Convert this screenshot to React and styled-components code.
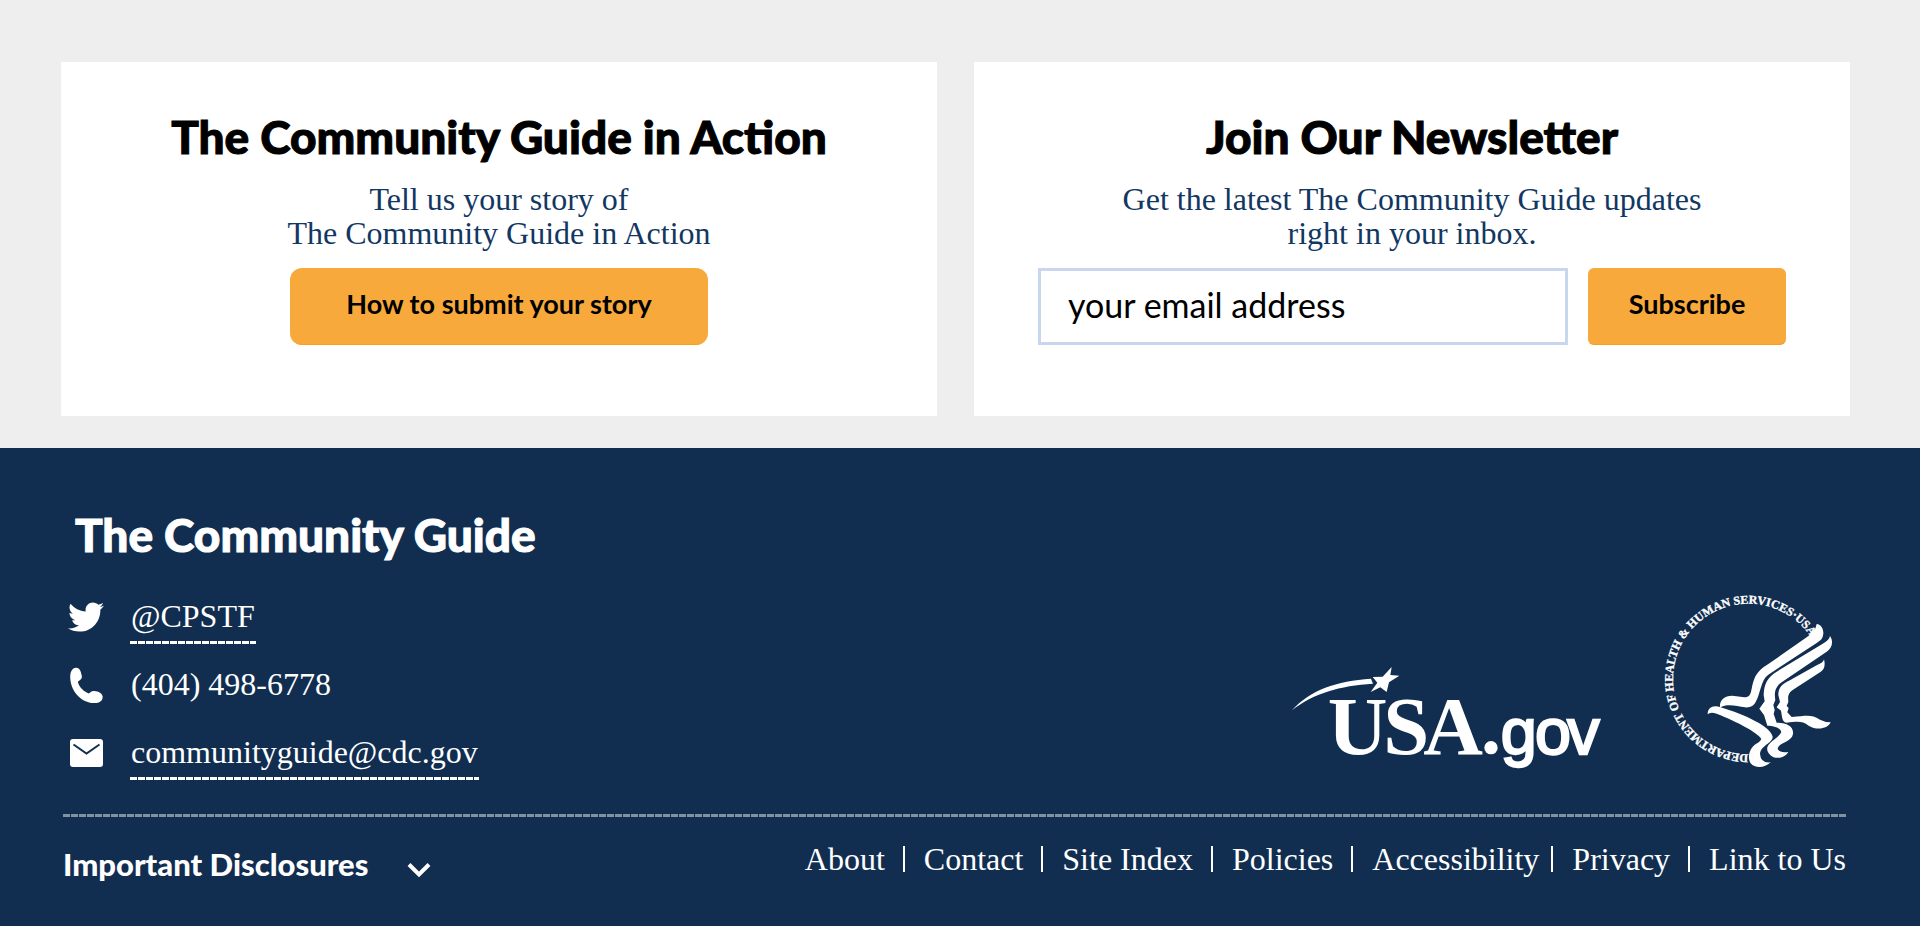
import React from "react";
import styled, { createGlobalStyle } from "styled-components";
import { FaTwitter } from "react-icons/fa";

const sans = `Lato, "Liberation Sans", sans-serif`;
const serif = `"Liberation Serif", serif`;
const navy = "#112e51";
const amber = "#f8a93b";

const GlobalStyle = createGlobalStyle`
  *, *::before, *::after { box-sizing: border-box; }
  body { margin: 0; background: ${navy}; font-family: ${serif}; }
  h2, p, ul { margin: 0; padding: 0; }
  ul { list-style: none; }
`;

const Promos = styled.main`
  display: grid;
  grid-template-columns: 1fr 1fr;
  gap: 37px;
  padding: 62px 70px 32px 61px;
  background: #eee;
`;

const Card = styled.section`
  display: flex;
  flex-direction: column;
  align-items: center;
  padding: 47px 64px 71px;
  background: #fff;
  text-align: center;
`;

const Heading = styled.h2`
  font: 900 46px/56px ${sans};
  color: ${(p) => (p.$light ? "#fff" : "#000")};
  -webkit-text-stroke: 1px currentColor;
`;

const CardText = styled.p`
  margin: 17px 0 18px;
  font: 32px/34px ${serif};
  color: #123762;
`;

const Button = styled.button`
  height: 77px;
  padding: 0 0 4px;
  width: ${(p) => (p.$wide ? "418px" : "198px")};
  border: 0;
  border-bottom: 1px solid #f99f1b;
  border-radius: ${(p) => (p.$wide ? "12px" : "6px")};
  background: ${amber};
  color: #000;
  font: 700 27px/32px ${sans};
  cursor: pointer;
`;

const SignupForm = styled.form`
  display: flex;
  align-self: stretch;
  gap: 20px;
`;

const EmailInput = styled.input`
  flex: 1;
  min-width: 0;
  height: 77px;
  padding: 0 27px 4px;
  border: 3px solid #c9d7ee;
  background: #fff;
  color: #000;
  font: 400 34px/40px ${sans};
  &::placeholder { color: #000; opacity: 1; }
`;

const Footer = styled.footer`
  padding: 59px 74px 28px 63px;
  background: ${navy};
  color: #fff;
`;

const FooterTop = styled.div`
  display: flex;
  justify-content: space-between;
  align-items: flex-end;
  padding: 0 0 12px;
`;

const Contact = styled.div`
  ${Heading} { padding-left: 12px; margin-bottom: 35px; }
`;

const ContactRow = styled.li`
  display: flex;
  align-items: flex-start;
  gap: 26px;
  height: 68px;
  padding-left: 5px;
  font: 32px/36px ${serif};
`;

const IconBox = styled.span`
  display: flex;
  justify-content: center;
  align-items: center;
  width: 36px;
  height: 38px;
`;

const dashes = (color) =>
  `repeating-linear-gradient(90deg, ${color} 0 7px, transparent 7px 8px)`;

const ContactLink = styled.a`
  padding: 0 1px 10px;
  color: inherit;
  text-decoration: none;
  background: ${(p) => (p.$plain ? "none" : dashes("#fff"))} bottom left / 100% 3px no-repeat;
`;

const Logos = styled.div`
  display: flex;
  align-items: flex-end;
  gap: 60px;
  padding: 0 9px 30px 0;
`;

const LogoLink = styled.a`
  display: block;
  color: #fff;
  svg { display: block; overflow: visible; }
`;

const Divider = styled.hr`
  height: 3px;
  margin: 0;
  border: 0;
  background: ${dashes("#8191a4")};
`;

const FooterBottom = styled.div`
  display: flex;
  justify-content: space-between;
  align-items: flex-start;
  padding-top: 25px;
`;

const Disclosures = styled.button`
  display: flex;
  align-items: center;
  gap: 39px;
  margin-top: 3px;
  padding: 0;
  border: 0;
  background: none;
  color: #fff;
  font: 900 31px/38px ${sans};
  cursor: pointer;
  svg { margin-top: 12px; }
`;

const LinkList = styled.ul`
  display: flex;
  font: 32px/34px ${serif};
`;

const LinkItem = styled.li`
  display: flex;
  &:not(:last-child)::after {
    content: "";
    width: 2px;
    height: 26px;
    margin: 4px 19px 0 ${(p) => (p.$tight ? "12px" : "18px")};
    background: #fff;
  }
`;

const FooterLink = styled.a`
  color: inherit;
  text-decoration: none;
`;

const PhoneIcon = () => (
  <svg width="35" height="37" viewBox="58 226 104 112" fill="#fff" aria-hidden="true">
    <path d="M61 262C59 240 67 229 78 228C90 227 94 242 96 254C97 265 85 267 84 272C88 287 104 302 117 306C122 305 124 298 133 299C147 300 158 306 159 316C159 331 146 336 132 335C95 333 64 302 61 262Z" />
  </svg>
);

const MailIcon = () => (
  <svg width="33" height="28" viewBox="0 0 33 28" aria-hidden="true">
    <rect width="33" height="28" rx="3" fill="#fff" />
    <path d="M3.5 5.5L16.5 14.5L29.5 5.5" fill="none" stroke={navy} strokeWidth="2" />
  </svg>
);

const Chevron = () => (
  <svg width="24" height="16" viewBox="0 0 24 16" aria-hidden="true">
    <path d="M2 2.5L12 12.5L22 2.5" fill="none" stroke="#fff" strokeWidth="4" />
  </svg>
);

const UsaGovLogo = () => (
  <svg width="310" height="107" viewBox="60 80 930 321" fill="#fff" role="img" aria-label="USA.gov">
    <path d="M66 216C120 155 200 128 303 121L309 136C210 142 130 165 66 216Z" />
    <path d="M365 86L361 110L388 112L357 132L350 161L331 147L302 161L322 133L308 116L338 115Z" />
    <text x="173 340 460" y="347" fontFamily="Liberation Serif, serif" fontWeight="700" fontSize="248">USA</text>
    <circle cx="663" cy="328" r="20" />
    <text x="692 795 892" y="347" fontFamily="Liberation Sans, sans-serif" fontSize="194" stroke="#fff" strokeWidth="7">gov</text>
  </svg>
);

const HhsLogo = () => (
  <svg width="177" height="182" viewBox="60 30 531 546" fill="#fff" role="img" aria-label="Department of Health and Human Services USA">
    <defs>
      <path id="seal-ring" d="M325 523A226 226 0 1 1 551 297" />
    </defs>
    <text fontFamily="Liberation Serif, serif" fontWeight="700" fontSize="36" stroke="#fff" strokeWidth="1">
      <textPath href="#seal-ring">DEPARTMENT OF HEALTH &amp; HUMAN SERVICES·USA</textPath>
    </text>
    <path d="M530 132C548 134 556 158 545 177Q541 182 530 189L385 284C362 300 362 340 347 366Q339 384 315 382C290 378 260 370 240 383C238 362 251 347 277 347L313 352C338 352 331 328 342 299C352 272 370 262 385 252L500 172Q526 156 530 132Z" />
    <path d="M570 168C581 184 577 204 560 215L425 307C403 322 403 343 406 360L400 375L404 390L401 402L410 428C440 428 462 439 459 462C456 486 414 488 413 507Q420 520 445 516C434 535 405 540 390 524C373 507 384 492 402 479Q420 466 424 456C420 441 399 438 382 437L372 405L358 386L374 364L371 345C372 310 384 291 410 275L547 192Q568 181 570 168Z" />
    <path d="M552 238C557 258 552 269 540 277L458 330C440 343 445 356 445 366L440 378L446 384L442 397L455 411C500 408 512 402 540 419Q556 427 572 427C563 447 530 452 506 437C486 421 470 425 440 428Q428 427 426 410L423 392L410 382L420 366L415 345C415 319 430 311 447 302L530 256Q551 248 552 238Z" />
    <path d="M203 403C203 382 220 374 242 382C315 404 392 440 398 470C398 490 362 495 360 522Q362 550 392 547C374 565 345 566 332 550C320 530 330 500 353 489Q363 482 364 476C350 456 293 426 230 401Q211 394 203 403Z" />
  </svg>
);

const contacts = [
  { icon: <FaTwitter size={36} />, label: "@CPSTF", href: "#twitter" },
  { icon: <PhoneIcon />, label: "(404) 498-6778", href: "tel:4044986778", plain: true },
  { icon: <MailIcon />, label: "communityguide@cdc.gov", href: "mailto:communityguide@cdc.gov" },
];

const links = ["About", "Contact", "Site Index", "Policies", "Accessibility", "Privacy", "Link to Us"];

export default function App() {
  return (
    <>
      <GlobalStyle />
      <Promos>
        <Card>
          <Heading>The Community Guide in Action</Heading>
          <CardText>
            Tell us your story of
            <br />
            The Community Guide in Action
          </CardText>
          <Button $wide type="button">How to submit your story</Button>
        </Card>
        <Card>
          <Heading>Join Our Newsletter</Heading>
          <CardText>
            Get the latest The Community Guide updates
            <br />
            right in your inbox.
          </CardText>
          <SignupForm onSubmit={(e) => e.preventDefault()}>
            <EmailInput type="email" aria-label="your email address" placeholder="your email address" />
            <Button type="submit">Subscribe</Button>
          </SignupForm>
        </Card>
      </Promos>
      <Footer>
        <FooterTop>
          <Contact>
            <Heading $light>The Community Guide</Heading>
            <ul>
              {contacts.map((c) => (
                <ContactRow key={c.label}>
                  <IconBox>{c.icon}</IconBox>
                  <ContactLink href={c.href} $plain={c.plain}>{c.label}</ContactLink>
                </ContactRow>
              ))}
            </ul>
          </Contact>
          <Logos>
            <LogoLink href="#usa-gov"><UsaGovLogo /></LogoLink>
            <LogoLink href="#hhs"><HhsLogo /></LogoLink>
          </Logos>
        </FooterTop>
        <Divider />
        <FooterBottom>
          <Disclosures type="button">
            Important Disclosures
            <Chevron />
          </Disclosures>
          <nav>
            <LinkList>
              {links.map((label) => (
                <LinkItem key={label} $tight={label === "Accessibility"}>
                  <FooterLink href={`#${label.toLowerCase().replace(/ /g, "-")}`}>{label}</FooterLink>
                </LinkItem>
              ))}
            </LinkList>
          </nav>
        </FooterBottom>
      </Footer>
    </>
  );
}
